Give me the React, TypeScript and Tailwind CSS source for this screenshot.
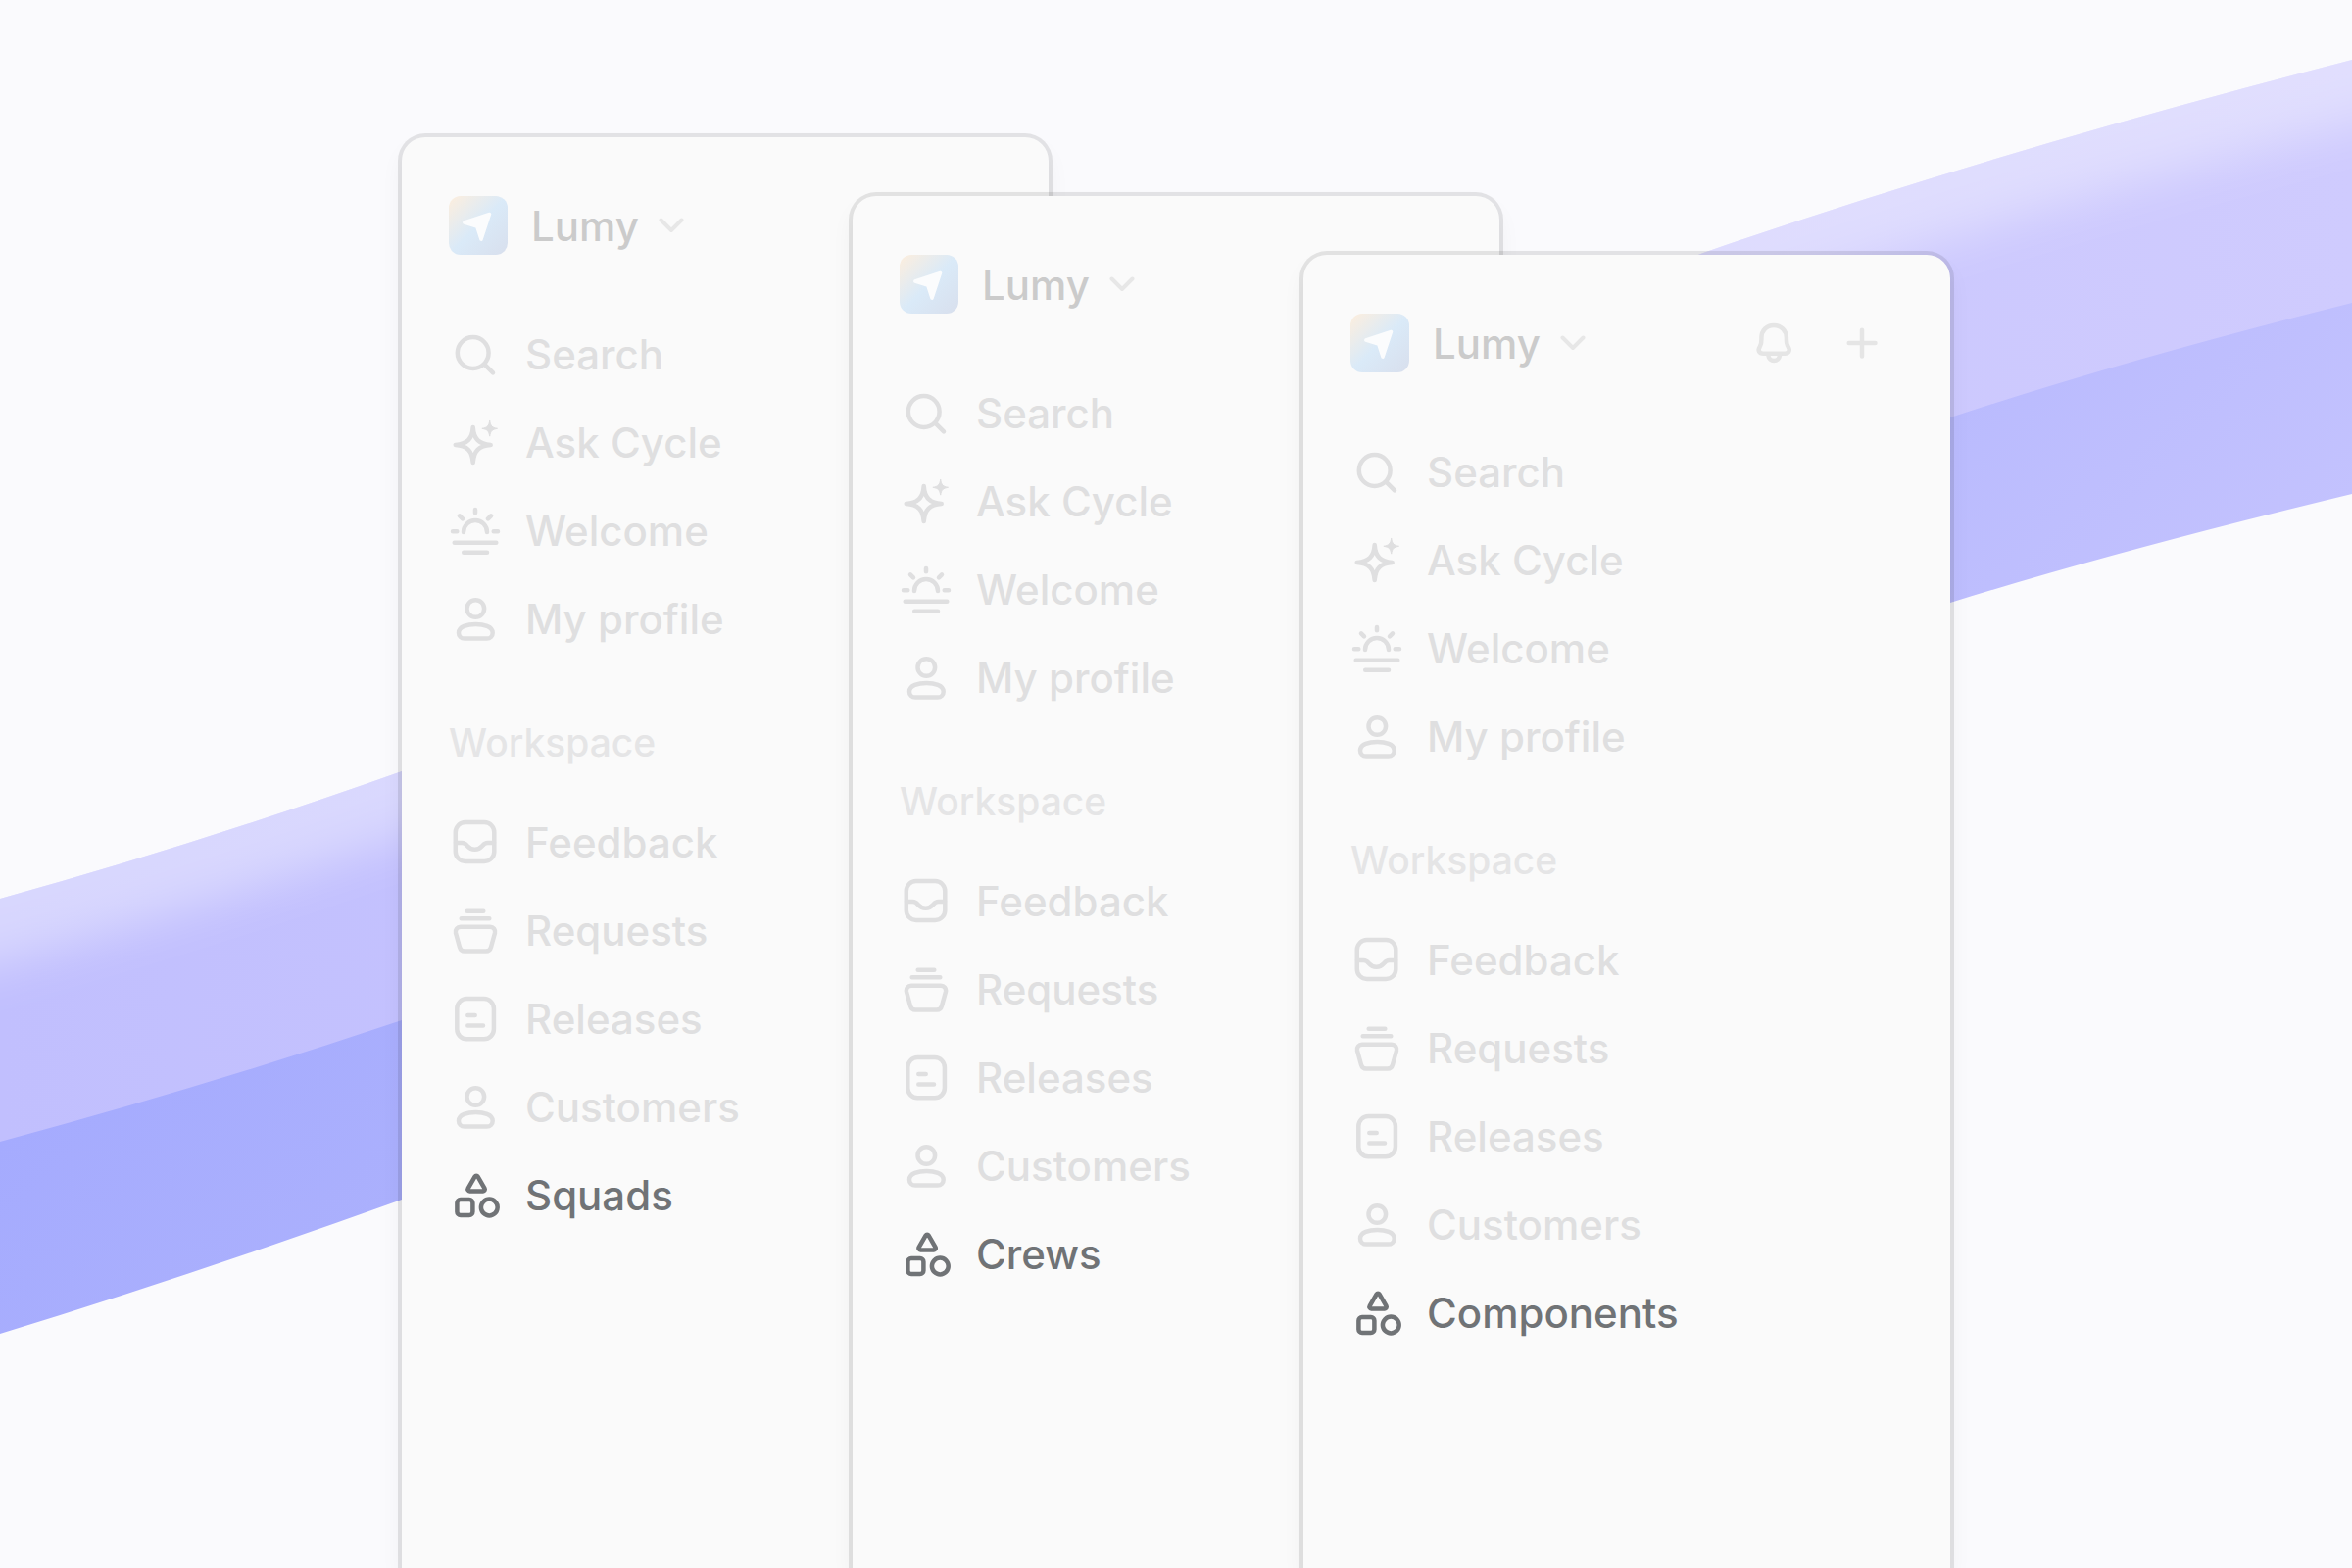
import type { ReactNode } from "react";

const icons: Record<string, ReactNode> = {
  search: (
    <>
      <circle cx="24.7" cy="24" r="15.9" />
      <path d="M36.5 35.8l8.5 8.5" />
    </>
  ),
  sparkles: (
    <>
      <path d="M24.7 10c.8 12 6 17.2 18 18c-12 .8-17.2 6-18 18c-.8-12-6-17.2-18-18c12-.8 17.2-6 18-18z" />
      <path
        d="M41.7 3.5c1 5.5 2.300 6.800 7.800 7.800c-5.500 1-6.800 2.300-7.800 7.800c-1-5.500-2.300-6.800-7.800-7.800c5.500-1 6.800-2.300 7.800-7.800z"
        fill="currentColor"
        strokeWidth="1"
      />
    </>
  ),
  sunrise: (
    <>
      <path d="M27 4v3.2M11 10.3l3 3M43 10.3l-3 3M4 26.3h4.3M45.7 26.3H50" />
      <path d="M15 27a12 12 0 0 1 24 0" />
      <path d="M5.7 37.7h42.6M15.2 47.7h23.8" />
    </>
  ),
  person: (
    <>
      <circle cx="27.3" cy="15" r="8.8" />
      <path d="M27.3 31c8 0 17.4 2 17.4 8.7c0 3.5-2.5 5.9-6 5.9H16c-3.5 0-6-2.4-6-5.9C10 33 19.3 31 27.3 31z" />
    </>
  ),
  inbox: (
    <>
      <rect x="6.8" y="5.1" width="39.5" height="39.8" rx="10" />
      <path d="M7 26h6.5c6 0 4.7 6.7 13 6.7s7-6.7 13-6.7H46" />
    </>
  ),
  basket: (
    <>
      <path d="M18.7 5.7h16.6M12.7 13.3h28.6" />
      <path d="M12 21.8h30c3.5 0 5.7 3 5 6.2l-4 14.5c-.7 2.6-2.5 4.1-5 4.1H16c-2.5 0-4.3-1.5-5-4.1L7 28c-.7-3.2 1.5-6.2 5-6.2z" />
    </>
  ),
  note: (
    <>
      <rect x="8.3" y="5.1" width="37.6" height="41.2" rx="10" />
      <path d="M19.3 22h7.4M19.3 32.5H35" />
    </>
  ),
  shapes: (
    <>
      <path d="M26.6 6.7c.7-1.2 2.3-1.2 3 0l6.9 12c.7 1.2-.1 2.7-1.5 2.7H21.2c-1.4 0-2.2-1.5-1.5-2.7z" />
      <rect x="8.4" y="30" width="16" height="16" rx="3.5" />
      <circle cx="41.3" cy="38" r="8.4" />
    </>
  ),
  bell: (
    <>
      <path d="M27 9c-7.5 0-12.6 5.5-12.6 12.5c0 5.5.3 6.5-1.7 9.5c-2.5 3.7-.2 6.7 3.5 6.7h22c3.7 0 6-3 3.5-6.7c-2-3-1.8-4-1.8-9.5C39.9 14.5 34.5 9 27 9z" />
      <path d="M21.3 39.5c.5 3.5 3 5.5 5.9 5.5s5.4-2 5.9-5.5" />
    </>
  ),
  plus: <path d="M27 13.7v26.8M13.7 27h26.8" />,
};

function Icon({ name }: { name: string }) {
  return (
    <svg
      viewBox="0 0 54 54"
      className="size-[54px] shrink-0"
      fill="none"
      stroke="currentColor"
      strokeWidth="4.5"
      strokeLinecap="round"
      strokeLinejoin="round"
      aria-hidden="true"
    >
      {icons[name]}
    </svg>
  );
}

function Logo() {
  return (
    <div className="flex size-[60px] shrink-0 rounded-xl bg-linear-to-br from-[#fdeedd] via-[#daeaf8] via-50% to-[#d8dfed]">
      <svg viewBox="0 0 60 60" className="size-full" aria-hidden="true">
        <path
          d="M41.5 18.5L33 44.2L28.7 31L15.8 27z"
          fill="#fbfcfd"
          stroke="#fbfcfd"
          strokeWidth="3.5"
          strokeLinejoin="round"
        />
      </svg>
    </div>
  );
}

type Item = { label: string; icon: string };

const mainItems: Item[] = [
  { label: "Search", icon: "search" },
  { label: "Ask Cycle", icon: "sparkles" },
  { label: "Welcome", icon: "sunrise" },
  { label: "My profile", icon: "person" },
];

const workspaceItems: Item[] = [
  { label: "Feedback", icon: "inbox" },
  { label: "Requests", icon: "basket" },
  { label: "Releases", icon: "note" },
  { label: "Customers", icon: "person" },
];

function NavItem({ label, icon, active }: Item & { active?: boolean }) {
  return (
    <li>
      <a
        href="#"
        className={`flex h-[90px] items-center gap-6 text-[42px] font-medium ${active ? "text-[#707376]" : "text-[#dfdfe0]"}`}
      >
        <Icon name={icon} />
        <span className="pb-1">{label}</span>
      </a>
    </li>
  );
}

function Sidebar({ teamLabel, className }: { teamLabel: string; className: string }) {
  return (
    <aside
      className={`w-[660px] shrink-0 rounded-t-3xl bg-[#fafafa] px-12 pt-[60px] shadow-[0_0_0_4px_rgba(0,0,0,0.09),0_12px_24px_rgba(0,0,0,0.05)] ${className}`}
    >
      <div className="flex h-[60px] items-center justify-between">
        <button type="button" className="flex items-center gap-5 text-[42px] font-medium text-[#cbcbcb]">
          <Logo />
          <span className="pl-1">Lumy</span>
          <svg
            viewBox="0 0 26 16"
            className="h-4 w-[26px] text-[#e7e7e7]"
            fill="none"
            stroke="currentColor"
            strokeWidth="4"
            strokeLinecap="round"
            strokeLinejoin="round"
            aria-hidden="true"
          >
            <path d="M2.5 2.5L13 13L23.5 2.5" />
          </svg>
        </button>
        <div className="mr-[15px] flex gap-9 text-[#e5e5e5]">
          <button type="button" aria-label="Notifications">
            <Icon name="bell" />
          </button>
          <button type="button" aria-label="New">
            <Icon name="plus" />
          </button>
        </div>
      </div>

      <nav>
        <ul className="mt-[58px]">
          {mainItems.map((item) => (
            <NavItem key={item.label} {...item} />
          ))}
        </ul>
        <h2 className="mt-[50px] h-[60px] text-[39px] leading-[60px] font-medium text-[#e5e5e6]">Workspace</h2>
        <ul className="mt-7">
          {workspaceItems.map((item) => (
            <NavItem key={item.label} {...item} />
          ))}
          <NavItem label={teamLabel} icon="shapes" active />
        </ul>
      </nav>
    </aside>
  );
}

function Ribbon() {
  return (
    <svg
      viewBox="0 0 2400 1600"
      preserveAspectRatio="none"
      className="absolute inset-0 -z-10 size-full"
      aria-hidden="true"
    >
      <defs>
        <linearGradient id="upper" x1="0" x2="1" y1="0" y2="0">
          <stop offset="0" stopColor="#c1bffe" />
          <stop offset="1" stopColor="#cfcbfe" />
        </linearGradient>
        <linearGradient id="lower" gradientUnits="userSpaceOnUse" x1="0" y1="1166" x2="869" y2="2035">
          <stop offset="0" stopColor="#a5abfe" />
          <stop offset="0.27" stopColor="#abb0fd" />
          <stop offset="0.72" stopColor="#babbfe" />
          <stop offset="1" stopColor="#c3c2fe" />
        </linearGradient>
        <clipPath id="upperClip">
          <path d="M0 917Q193 864 410 787L1738 258Q2025 158 2400 61V309Q2172 366 1990 426L410 1041Q205 1110 0 1165z" />
        </clipPath>
        <filter id="soft" filterUnits="userSpaceOnUse" x="-300" y="-200" width="3000" height="2000">
          <feGaussianBlur stdDeviation="24" />
        </filter>
      </defs>
      <path
        d="M0 1164Q205 1109 410 1040L1990 425Q2172 365 2400 308V504Q2164 561 1990 615L410 1224Q193 1302 0 1361z"
        fill="url(#lower)"
      />
      <g clipPath="url(#upperClip)">
        <rect width="2400" height="1600" fill="url(#upper)" />
        <path
          d="M-200 970L0 917Q193 864 410 787L1738 258Q2025 158 2400 61L2600 10"
          fill="none"
          stroke="#fff"
          strokeOpacity="0.37"
          strokeWidth="128"
          filter="url(#soft)"
        />
      </g>
    </svg>
  );
}

export default function App() {
  return (
    <main className="relative isolate flex min-h-screen justify-center overflow-hidden bg-[#fafafd] font-['Inter',sans-serif]">
      <Ribbon />
      <Sidebar teamLabel="Squads" className="mt-[140px]" />
      <Sidebar teamLabel="Crews" className="mt-[200px] -ml-[200px]" />
      <Sidebar teamLabel="Components" className="mt-[260px] -ml-[200px]" />
    </main>
  );
}
